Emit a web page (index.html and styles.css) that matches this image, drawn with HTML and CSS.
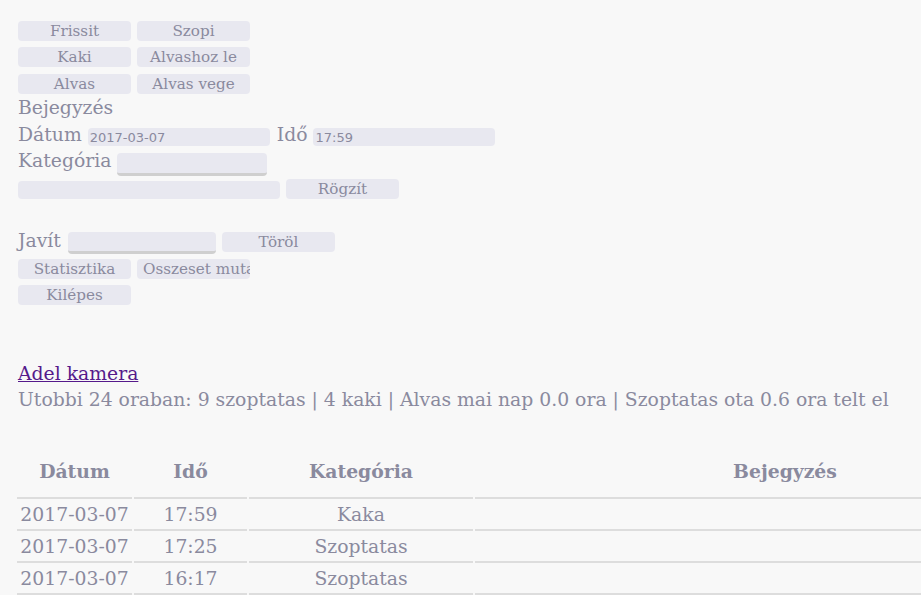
FILE: index.html
```html
<!DOCTYPE html>
<html lang="hu">
<head>
<meta charset="utf-8">
<title>Adel</title>
<link rel="stylesheet" href="styles.css">
</head>
<body>
<div class="page">
  <div class="btn-row"><button class="btn">Frissit</button><button class="btn">Szopi</button></div>
  <div class="btn-row row2"><button class="btn">Kaki</button><button class="btn">Alvashoz le</button></div>
  <div class="btn-row row3"><button class="btn">Alvas</button><button class="btn">Alvas vege</button></div>
  <div class="title">Bejegyzés</div>
  <div class="field-row date-row">
    <span class="label">Dátum</span><input class="inp inp-date" value="2017-03-07">
    <span class="label label-ido">Idő</span><input class="inp inp-date" value="17:59">
  </div>
  <div class="field-row cat-row">
    <span class="label">Kategória</span><select class="sel sel-cat"></select>
  </div>
  <div class="field-row note-row">
    <input class="inp inp-note" value=""><button class="btn">Rögzít</button>
  </div>
  <div class="field-row fix-row">
    <span class="label">Javít</span><select class="sel sel-fix"></select><button class="btn btn-fix">Töröl</button>
  </div>
  <div class="btn-row row-stat"><button class="btn">Statisztika</button><button class="btn btn-clip">Osszeset mutat</button></div>
  <div class="btn-row"><button class="btn">Kilépes</button></div>
  <div class="cam-line"><a class="cam" href="#">Adel kamera</a></div>
  <div class="status">Utobbi 24 oraban: 9 szoptatas | 4 kaki | Alvas mai nap 0.0 ora | Szoptatas ota 0.6 ora telt el</div>
  <div class="table-wrap">
    <table class="log">
      <thead>
        <tr><th class="c1">Dátum</th><th class="c2">Idő</th><th class="c3">Kategória</th><th class="c4">Bejegyzés</th></tr>
      </thead>
      <tbody>
        <tr><td>2017-03-07</td><td>17:59</td><td>Kaka</td><td></td></tr>
        <tr><td>2017-03-07</td><td>17:25</td><td>Szoptatas</td><td></td></tr>
        <tr><td>2017-03-07</td><td>16:17</td><td>Szoptatas</td><td></td></tr>
      </tbody>
    </table>
  </div>
</div>
</body>
</html>
```
FILE: styles.css
```css
html, body {
  margin: 0;
  padding: 0;
  background: #f8f8f8;
  overflow: hidden;
}
body {
  font-family: "DejaVu Serif", serif;
  font-size: 18.8px;
  color: #8a8a9e;
}
.page {
  padding: 21px 0 0 18px;
}
.btn-row {
  display: flex;
  gap: 6px;
  height: 20px;
  margin-bottom: 6px;
}
.row2 {
  margin-bottom: 7px;
}
.row3 {
  margin-bottom: 0;
}
.btn {
  box-sizing: border-box;
  flex: none;
  width: 113px;
  height: 20px;
  padding: 0 6px;
  border: none;
  border-radius: 4px;
  background: #e8e8f0;
  color: #8a8a9e;
  font-family: "DejaVu Serif", serif;
  font-size: 15.2px;
  line-height: 20px;
  white-space: nowrap;
  overflow: hidden;
  text-align: center;
}
.btn-clip {
  text-align: left;
}
.title {
  height: 28px;
  line-height: 28px;
}
.field-row {
  display: flex;
  align-items: flex-start;
  gap: 6px;
}
.label {
  line-height: 26px;
  white-space: nowrap;
}
.inp {
  box-sizing: border-box;
  flex: none;
  border: none;
  border-radius: 4px;
  background: #e8e8f0;
  color: #8a8a9e;
  font-family: "DejaVu Sans", sans-serif;
  font-size: 13px;
  padding: 0 2px;
  outline: none;
}
.date-row {
  height: 26px;
}
.inp-date {
  width: 182px;
  height: 18px;
  margin-top: 6px;
}
.label-ido {
  margin-left: 1px;
}
.sel {
  appearance: none;
  -webkit-appearance: none;
  box-sizing: border-box;
  flex: none;
  border: none;
  border-bottom: 3px solid #cfcfcf;
  border-radius: 4px;
  background: #e8e8f0;
  height: 23px;
  margin-top: 5px;
}
.cat-row {
  height: 31px;
}
.sel-cat {
  width: 150px;
}
.note-row {
  height: 20px;
}
.inp-note {
  width: 262px;
  height: 18px;
  margin-top: 2px;
}
.fix-row {
  margin-top: 29px;
  height: 26px;
}
.sel-fix {
  width: 148px;
  margin-top: 4px;
  margin-left: 1px;
  height: 22px;
}
.btn-fix {
  margin-top: 4px;
}
.row-stat {
  margin-top: 5px;
}
.cam-line {
  margin-top: 58px;
  height: 24px;
  line-height: 22px;
}
.cam {
  color: #551a8b;
}
.status {
  height: 26px;
  line-height: 26px;
  white-space: nowrap;
}
.table-wrap {
  margin-top: 32px;
  margin-left: -3px;
  overflow: hidden;
}
.log {
  border-collapse: separate;
  border-spacing: 2px 0;
  width: 1082px;
}
.log th {
  box-sizing: border-box;
  font-weight: bold;
  text-align: center;
  height: 54px;
  padding: 0;
  border-bottom: 2px solid #dddddd;
  vertical-align: middle;
}
.log td {
  box-sizing: border-box;
  text-align: center;
  height: 32px;
  padding: 0;
  border-bottom: 2px solid #dddddd;
  vertical-align: middle;
}
.c1 { width: 115px; }
.c2 { width: 113px; }
.c3 { width: 224px; }
```
